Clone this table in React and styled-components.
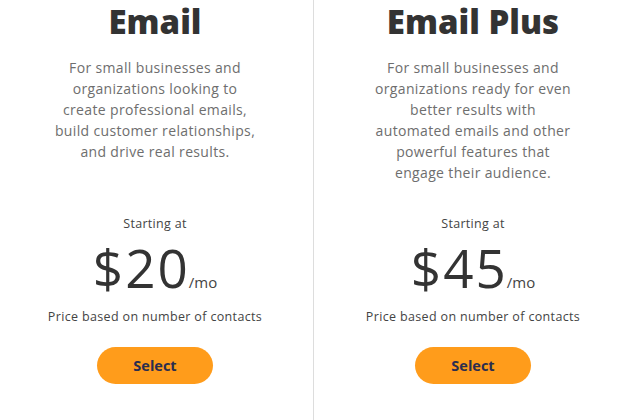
import React from "react";
import styled, { createGlobalStyle } from "styled-components";

const Global = createGlobalStyle`
  html, body { margin: 0; padding: 0; background: #fff; }
  body { font-family: "Open Sans", "Noto Sans", sans-serif; }
`;

const Page = styled.div`
  display: grid;
  grid-template-columns: 314px 1fr;
  width: 632px;
  height: 420px;
  overflow: hidden;
`;

const Column = styled.section`
  display: flex;
  flex-direction: column;
  align-items: center;
  padding-top: 2px;
  border-right: ${(p) => (p.$divider ? "1px solid #dddddd" : "none")};
  padding-right: ${(p) => (p.$divider ? "3px" : "0")};
`;

const Title = styled.h2`
  margin: 0;
  font-size: 33px;
  line-height: 40px;
  font-weight: 800;
  color: #333333;
`;

const Desc = styled.p`
  margin: 15px 0 0;
  min-height: 126px;
  font-size: 14px;
  line-height: 21px;
  color: #6e6e6e;
  text-align: center;
  letter-spacing: 0.35px;
`;

const Starting = styled.div`
  margin-top: 32px;
  font-size: 12.5px;
  line-height: 18px;
  letter-spacing: 0.3px;
  color: #444444;
`;

const PriceRow = styled.div`
  margin-top: 9px;
  display: flex;
  align-items: baseline;
  color: #333333;
`;

const Amount = styled.span`
  font-size: 53px;
  line-height: 52px;
  font-weight: 400;
  letter-spacing: 2px;
`;

const Per = styled.span`
  font-size: 15px;
  color: #444444;
  margin-left: -1px;
`;

const Note = styled.div`
  margin-top: 14px;
  font-size: 12.5px;
  line-height: 18px;
  letter-spacing: 0.35px;
  color: #444444;
`;

const SelectButton = styled.button`
  margin-top: 21px;
  width: 116px;
  height: 37px;
  border: none;
  border-radius: 19px;
  background: #ff9c1b;
  color: #2b2d4f;
  font-family: inherit;
  font-size: 14.5px;
  font-weight: 700;
  cursor: pointer;
`;

const plans = [
  {
    name: "Email",
    lines: [
      "For small businesses and",
      "organizations looking to",
      "create professional emails,",
      "build customer relationships,",
      "and drive real results.",
    ],
    price: "$20",
  },
  {
    name: "Email Plus",
    lines: [
      "For small businesses and",
      "organizations ready for even",
      "better results with",
      "automated emails and other",
      "powerful features that",
      "engage their audience.",
    ],
    price: "$45",
  },
];

export default function App() {
  return (
    <>
      <Global />
      <Page>
        {plans.map((plan, i) => (
          <Column key={plan.name} $divider={i === 0}>
            <Title>{plan.name}</Title>
            <Desc>
              {plan.lines.map((l, j) => (
                <React.Fragment key={j}>
                  {l}
                  {j < plan.lines.length - 1 && <br />}
                </React.Fragment>
              ))}
            </Desc>
            <Starting>Starting at</Starting>
            <PriceRow>
              <Amount>{plan.price}</Amount>
              <Per>/mo</Per>
            </PriceRow>
            <Note>Price based on number of contacts</Note>
            <SelectButton>Select</SelectButton>
          </Column>
        ))}
      </Page>
    </>
  );
}
